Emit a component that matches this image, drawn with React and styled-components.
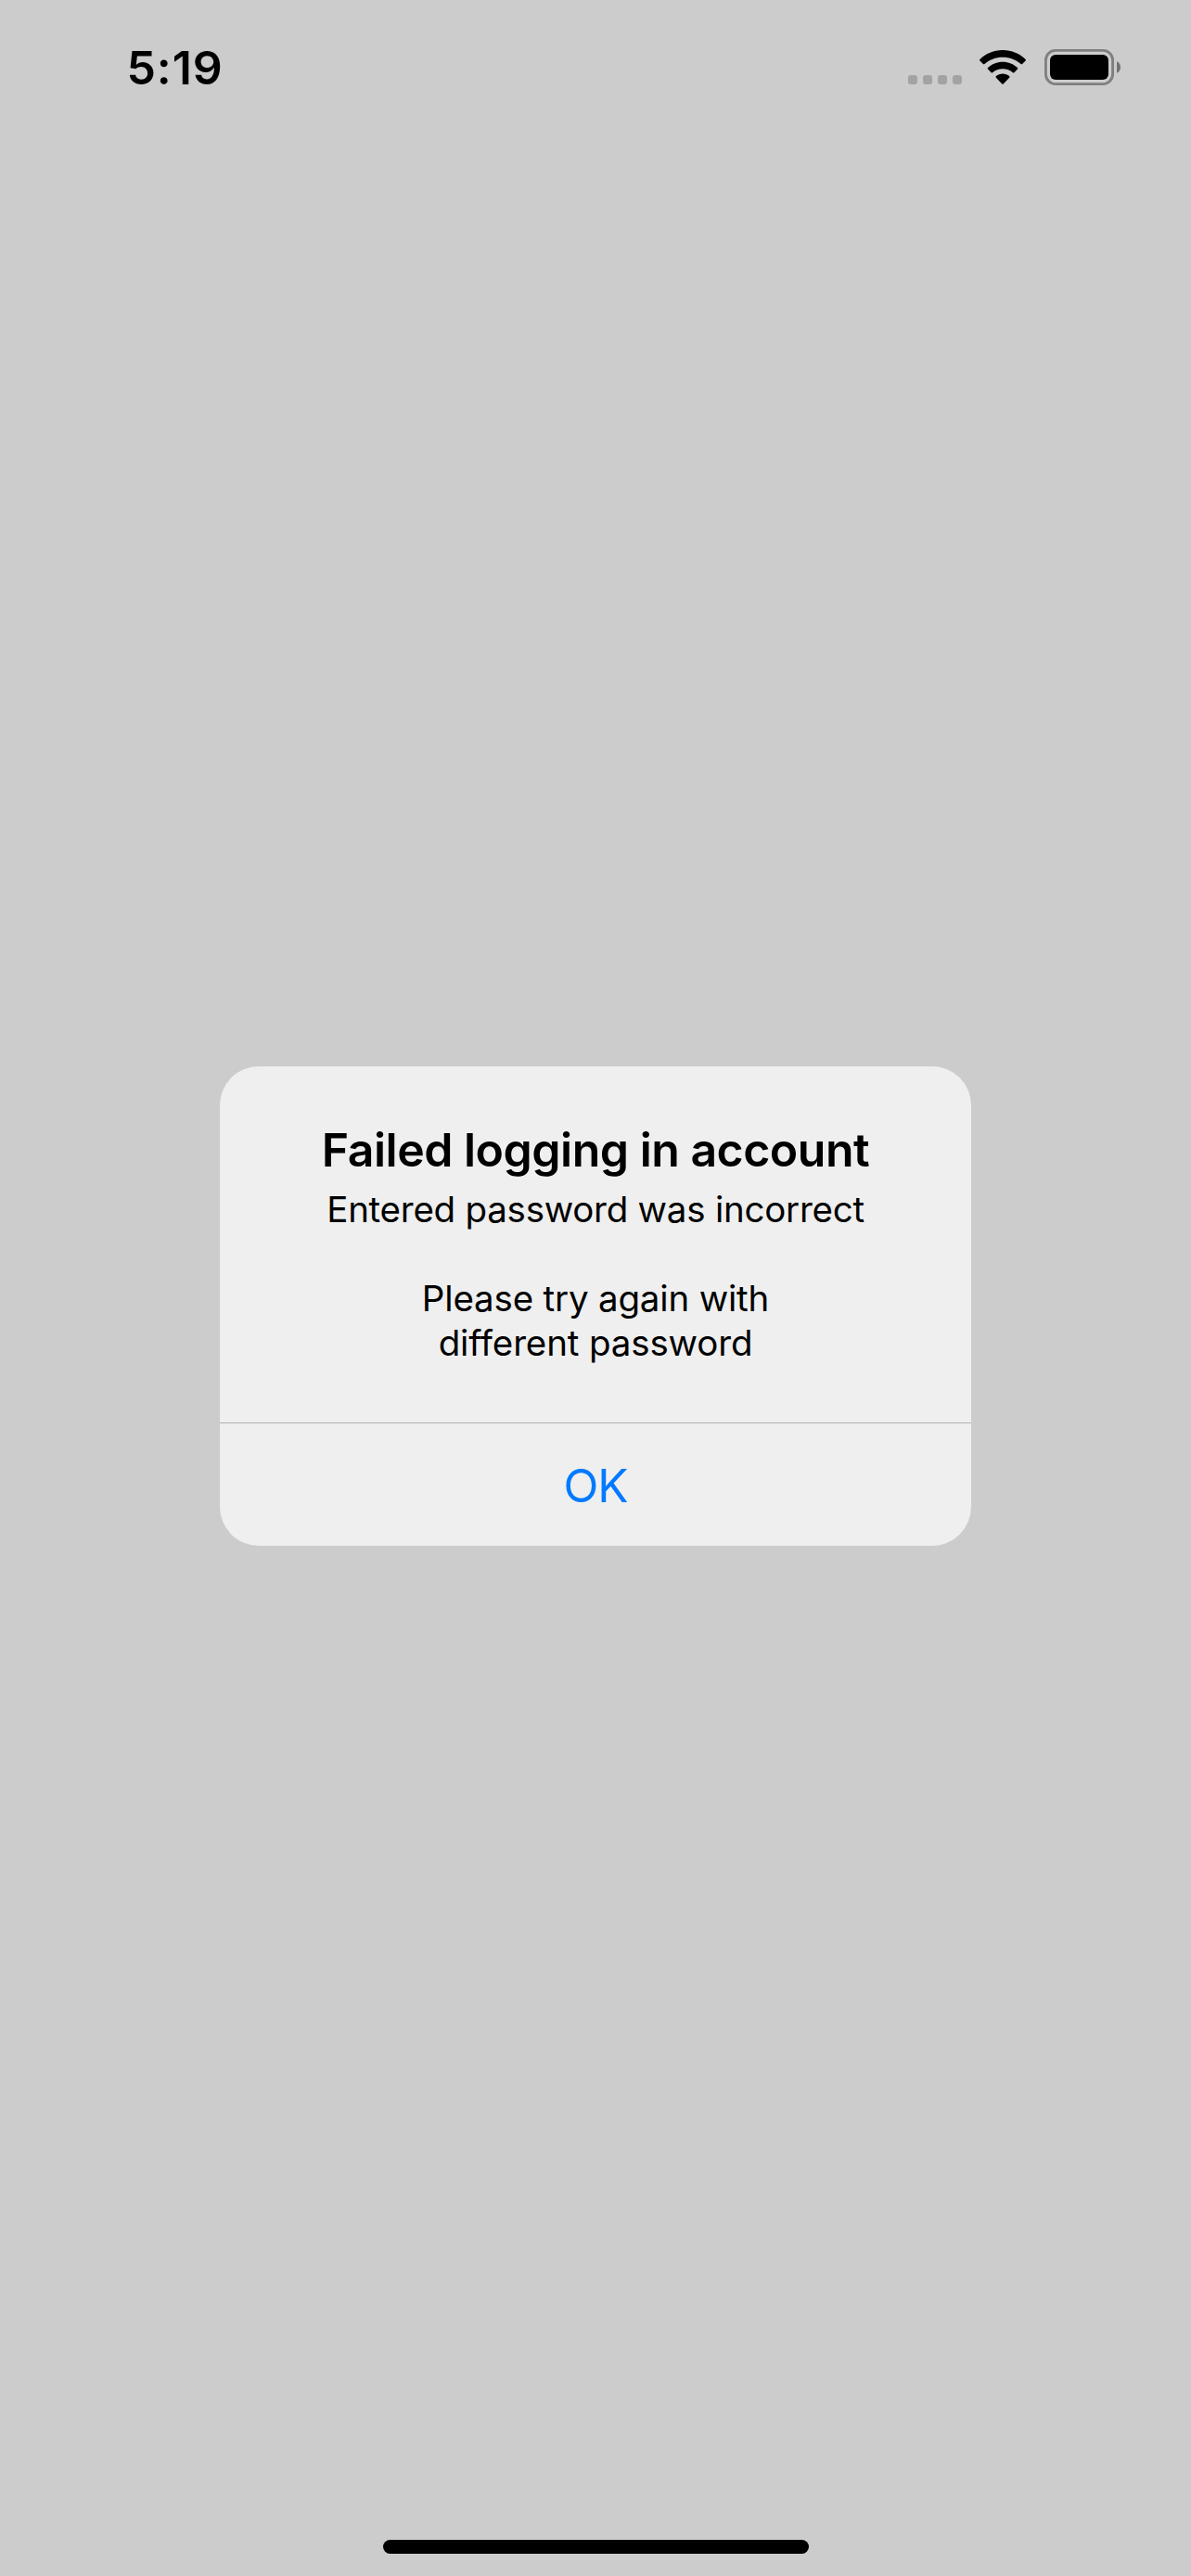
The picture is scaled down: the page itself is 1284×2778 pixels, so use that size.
import React from 'react';
import styled, { createGlobalStyle } from 'styled-components';

const GlobalStyle = createGlobalStyle`
  * { box-sizing: border-box; }
  body {
    margin: 0;
    background: #ccc;
    font-family: Inter, "Liberation Sans", sans-serif;
    color: #000;
  }
`;

const Screen = styled.div`
  display: flex;
  flex-direction: column;
  align-items: center;
  width: 1284px;
  height: 2778px;
  overflow: hidden;
  background: #ccc;
`;

const StatusBar = styled.header`
  display: flex;
  justify-content: space-between;
  align-items: flex-start;
  width: 100%;
  height: 141px;
  padding: 43px 76px 0 136.5px;
`;

const Time = styled.time`
  font-size: 50px;
  font-weight: 600;
  line-height: 60px;
  letter-spacing: ${(p) => p.$tracking}px;
`;

const Indicators = styled.div`
  display: flex;
  align-items: flex-start;
  padding-top: 10px;
`;

const Signal = styled.div`
  display: flex;
  gap: 6px;
  margin: 28px 19px 0 0;
`;

const SignalDot = styled.span`
  width: 10px;
  height: 10px;
  border-radius: 3px;
  background: #a3a3a3;
`;

const WifiIcon = styled.svg`
  width: 50px;
  height: 38px;
  margin: 1px 20px 0 0;
`;

const BatteryIcon = styled.svg`
  width: 82px;
  height: 39px;
`;

const Stage = styled.main`
  display: flex;
  flex: 1;
  justify-content: center;
  align-items: flex-start;
  padding-top: 1009px;
`;

const Alert = styled.section`
  display: flex;
  flex-direction: column;
  width: 810px;
  height: 517px;
  border-radius: 42px;
  overflow: hidden;
  background: #efefef;
`;

const AlertBody = styled.div`
  display: flex;
  flex-direction: column;
  align-items: center;
  gap: 10px;
  height: 384px;
  padding-top: 60px;
`;

const Title = styled.h1`
  margin: 0;
  font-size: 50px;
  font-weight: 600;
  line-height: 60px;
  letter-spacing: ${(p) => p.$tracking}px;
  white-space: nowrap;
`;

const Message = styled.div`
  display: flex;
  flex-direction: column;
  align-items: center;
  gap: 48px;
`;

const Paragraph = styled.p`
  margin: 0;
  font-size: 38.5px;
  line-height: 48px;
  text-align: center;
  white-space: nowrap;
`;

const Line = styled.span`
  display: block;
  letter-spacing: ${(p) => p.$tracking}px;
`;

const AlertButton = styled.button`
  flex: 1;
  margin: 0;
  padding: 2px 0 0;
  border: 0;
  border-top: 1px solid #b0b0b0;
  background: transparent;
  color: #007aff;
  font: 400 49.5px/60px Inter, "Liberation Sans", sans-serif;
  letter-spacing: ${(p) => p.$tracking}px;
`;

const HomeIndicator = styled.div`
  width: 459px;
  height: 15px;
  margin: 0 0 24px 1px;
  border-radius: 8px;
  background: #000;
`;

export default function App() {
  return (
    <>
      <GlobalStyle />
      <Screen>
        <StatusBar>
          <Time $tracking={0.9}>5:19</Time>
          <Indicators>
            <Signal>
              {[0, 1, 2, 3].map((n) => (
                <SignalDot key={n} />
              ))}
            </Signal>
            <WifiIcon viewBox="0 0 50 38">
              <path d="M25 0C34.6 0 43.2 3.8 49.6 9.9Q50.4 10.7 49.6 11.4L46.1 15Q45.4 15.7 44.6 15C39.5 10.4 32.6 7.7 25 7.7S10.5 10.4 5.4 15Q4.6 15.7 3.9 15L.4 11.4Q-.4 10.7.4 9.9C6.8 3.8 15.4 0 25 0Z" />
              <path d="M25 12.7C31.2 12.7 36.8 15.1 41 19Q41.8 19.8 41 20.6L37.4 24.2Q36.7 24.9 35.9 24.2C33 21.7 29.2 20.3 25 20.3S17 21.7 14.1 24.2Q13.3 24.9 12.6 24.2L9 20.6Q8.2 19.8 9 19C13.2 15.1 18.8 12.7 25 12.7Z" />
              <path d="M25 25.4C27.7 25.4 30.2 26.4 32.1 28.1Q33 28.9 32.2 29.7L25.7 36.5Q25 37.2 24.3 36.5L17.8 29.7Q17 28.9 17.9 28.1C19.8 26.4 22.3 25.4 25 25.4Z" />
            </WifiIcon>
            <BatteryIcon viewBox="0 0 82 39">
              <rect x="1.4" y="1.4" width="72.2" height="36.2" rx="10.5" fill="none" stroke="#7f7f7f" strokeWidth="2.8" />
              <rect x="6" y="6" width="63" height="27" rx="6" />
              <path d="M78 13.2C80.5 14.2 82 16.6 82 19.5S80.5 24.8 78 25.8Z" fill="#727272" />
            </BatteryIcon>
          </Indicators>
        </StatusBar>
        <Stage>
          <Alert role="alertdialog">
            <AlertBody>
              <Title $tracking={-0.5}>Failed logging in account</Title>
              <Message>
                <Paragraph>
                  <Line $tracking={-0.25}>Entered password was incorrect</Line>
                </Paragraph>
                <Paragraph>
                  <Line $tracking={-0.18}>Please try again with</Line>
                  <Line $tracking={-0.14}>different password</Line>
                </Paragraph>
              </Message>
            </AlertBody>
            <AlertButton $tracking={-1}>OK</AlertButton>
          </Alert>
        </Stage>
        <HomeIndicator />
      </Screen>
    </>
  );
}
